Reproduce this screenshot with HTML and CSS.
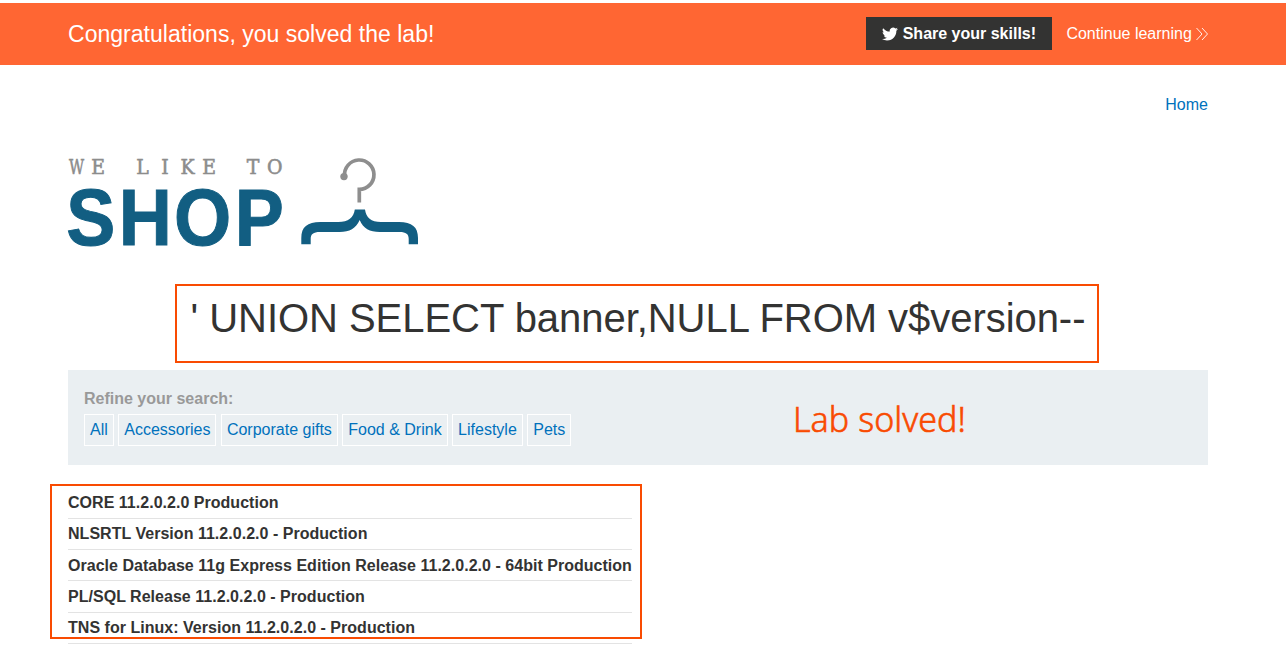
FILE: index.html
```html
<!DOCTYPE html>
<html lang="en">
<head>
<meta charset="utf-8">
<title>SQL injection lab</title>
<link rel="stylesheet" href="styles.css">
</head>
<body>
<header class="banner">
  <div class="container banner-row">
    <p class="banner-title">Congratulations, you solved the lab!</p>
    <div class="banner-actions">
      <a class="share" href="#"><svg class="bird" viewBox="0 0 24 24"><path d="M23.9 4.6a10 10 0 0 1-2.8.8 5 5 0 0 0 2.1-2.7c-1 .5-2 1-3.1 1.2a4.9 4.9 0 0 0-8.4 4.5C7.700 8.200 4.100 6.200 1.700 3.200a4.900 4.900 0 0 0 1.500 6.500 4.900 4.900 0 0 1-2.200-.6v.1c0 2.300 1.700 4.400 3.900 4.800a5 5 0 0 1-2.200.1 4.900 4.900 0 0 0 4.600 3.400A9.900 9.900 0 0 1 0 19.500 14 14 0 0 0 7.500 21.700c9.100 0 14-7.500 14-14v-.6a10 10 0 0 0 2.400-2.500z"/></svg>Share your skills!</a>
      <a class="continue" href="#">Continue learning<svg class="chevrons" viewBox="0 0 12 14"><path d="M.5 1 6 7 .5 13M6 1l5.500 6L6 13"/></svg></a>
    </div>
  </div>
</header>
<main class="container">
  <nav class="nav"><a href="#">Home</a></nav>
  <svg class="logo" viewBox="-4 0 356 92">
    <g class="logo-small">
      <text transform="translate(8.500 17.700) scale(.7 1)">W</text>
      <text transform="translate(0 17.700) scale(.9 1)" x="33.500 82.700 107.800 132.800 156.800 205.700 229.800">ELIKETO</text>
    </g>
    <text class="logo-big" transform="translate(0 88.500) scale(.92 1)" x="-1.800 55.200 115.100 181.400">SHOP</text>
    <path class="hook" d="M276.600 20a14.700 14.700 0 1 1 14.700 13.400V46.500"/>
    <circle class="knob" cx="276" cy="20.600" r="3.700"/>
    <path class="hanger" d="M286.500 53.500h10.500c1 8 6 12.500 16 12.500h18c13 0 19 5 19 16v6.300h-9.300V83c0-5-2.700-7-9-7h-20c-10 0-16.500-3.500-20-12-4 8.500-10 12-20 12h-20c-6.300 0-9 2-9 7v5.300H233.300V82c0-11 6-16 19-16h18c10 0 15.500-4.500 16.500-12.500z"/>
  </svg>
  <section class="heading">
    <h1>' UNION SELECT banner,NULL FROM v$version--</h1>
    <div class="mark mark-heading"></div>
  </section>
  <section class="filters">
    <div class="filter-group">
      <p class="filter-label">Refine your search:</p>
      <div class="filter-list">
        <a href="#">All</a><a href="#">Accessories</a><a href="#">Corporate gifts</a><a href="#">Food &amp; Drink</a><a href="#">Lifestyle</a><a href="#">Pets</a>
      </div>
    </div>
    <p class="note">Lab solved!</p>
  </section>
  <section class="results">
    <div class="row">CORE 11.2.0.2.0 Production</div>
    <div class="row">NLSRTL Version 11.2.0.2.0 - Production</div>
    <div class="row">Oracle Database 11g Express Edition Release 11.2.0.2.0 - 64bit Production</div>
    <div class="row">PL/SQL Release 11.2.0.2.0 - Production</div>
    <div class="row">TNS for Linux: Version 11.2.0.2.0 - Production</div>
    <div class="mark mark-results"></div>
  </section>
</main>
</body>
</html>
```
FILE: styles.css
```css
* { box-sizing: border-box; }
body {
  margin: 0;
  padding-top: 3px;
  background: #fff;
  color: #333332;
  font: 16px/20px "Liberation Sans", Arial, sans-serif;
}
p, h1 { margin: 0; }
a { color: #0071bc; text-decoration: none; }
.container { width: 1140px; margin-left: 68px; }

.banner { height: 62px; background: #ff6633; }
.banner-row { height: 62px; display: flex; justify-content: space-between; align-items: center; }
.banner-title { color: #fff; font-size: 23px; letter-spacing: .02px; }
.banner-actions { display: flex; align-items: center; gap: 14px; padding-bottom: 1px; }
.share {
  display: flex; align-items: center; gap: 4.300px;
  width: 186px; height: 33px; padding-left: 16px;
  background: #333332; color: #fff; font-weight: bold; white-space: nowrap;
}
.bird { width: 16px; height: 16px; fill: #fff; }
.continue { display: flex; align-items: center; gap: 4.200px; color: #fff; }
.chevrons { width: 12px; height: 14px; fill: none; stroke: #fff; stroke-width: .9; }

.nav { height: 91px; padding-top: 30px; text-align: right; }
.logo { display: block; width: 356px; height: 92px; margin-left: -4px; overflow: visible; }
.logo-small { fill: #8c8c8c; stroke: #8c8c8c; stroke-width: .6; font: 21px "DejaVu Serif", serif; text-anchor: middle; }
.logo-big { fill: #125e82; stroke: #125e82; stroke-width: 1; font: bold 80px "Liberation Sans", Arial, sans-serif; }
.hook { fill: none; stroke: #8e8e8e; stroke-width: 3.7; }
.knob { fill: #8e8e8e; }
.hanger { fill: #125e82; }

.heading { position: relative; height: 122px; padding-top: 47px; }
.heading h1 { font-size: 40px; font-weight: normal; line-height: 46px; letter-spacing: -.045px; text-align: center; white-space: nowrap; }
.mark { position: absolute; border: 2px solid #f94b02; }
.mark-heading { left: 107px; top: 36px; width: 924px; height: 79px; }

.filters { display: flex; height: 95px; padding: 19px 16px; background: #eaeff2; }
.filter-group { width: 709px; }
.filter-label { color: #999; font-weight: bold; }
.filter-list { display: flex; gap: 4.450px; margin-top: 5px; }
.filter-list a { height: 32px; padding: 5px; border: 1px solid #fff; white-space: nowrap; }
.note { padding-top: 7px; color: #f94b02; font: 300 34px/46px "Noto Sans", sans-serif; letter-spacing: .05px; -webkit-text-stroke: .6px #f94b02; white-space: nowrap; }

.results { position: relative; width: 564px; padding-top: 22.500px; }
.row { height: 31.250px; padding-top: 5.500px; border-bottom: 1px solid #e3e3e3; font-weight: bold; letter-spacing: .026px; white-space: nowrap; }
.mark-results { left: -18px; top: 19px; width: 592px; height: 155px; }
```
